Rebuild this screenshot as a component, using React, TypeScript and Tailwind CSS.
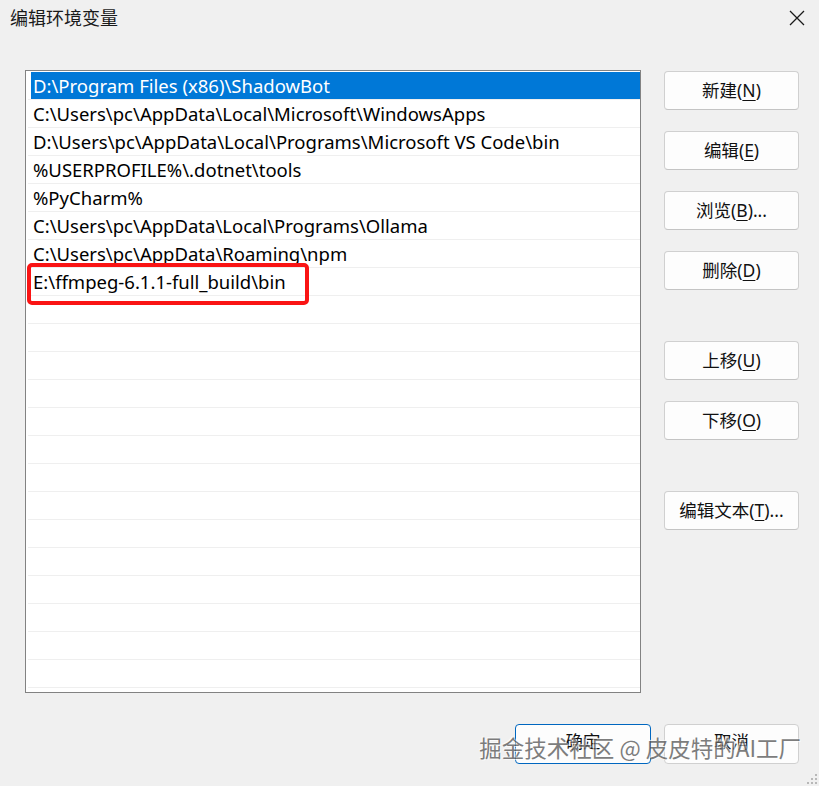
import React from "react";

const rows = [
  "D:\\Program Files (x86)\\ShadowBot",
  "C:\\Users\\pc\\AppData\\Local\\Microsoft\\WindowsApps",
  "D:\\Users\\pc\\AppData\\Local\\Programs\\Microsoft VS Code\\bin",
  "%USERPROFILE%\\.dotnet\\tools",
  "%PyCharm%",
  "C:\\Users\\pc\\AppData\\Local\\Programs\\Ollama",
  "C:\\Users\\pc\\AppData\\Roaming\\npm",
  "E:\\ffmpeg-6.1.1-full_build\\bin",
];

const font = { fontFamily: '"Noto Sans", "Noto Sans CJK SC", sans-serif' };

function Btn({ label, acc, suffix = "", className = "" }: { label: string; acc?: string; suffix?: string; className?: string }) {
  return (
    <div
      className={`w-[135px] h-[39px] flex items-center justify-center rounded-[4px] border border-[#d0d0d0] border-b-[#c4c4c4] bg-[#fdfdfd] text-[17.5px] text-[#111] ${className}`}
    >
      <span className="leading-none">
        {label}
        {acc !== undefined && (
          <>
            (<span className="underline underline-offset-[3px] decoration-1">{acc}</span>){suffix}
          </>
        )}
      </span>
    </div>
  );
}

export default function App() {
  const total = 22;
  return (
    <div className="relative w-[819px] h-[786px] bg-[#f0f0f0] overflow-hidden flex flex-col" style={font}>
      {/* title bar */}
      <div className="h-[36px] flex items-start justify-between">
        <div className="pl-[10px] pt-[5px] text-[18px] leading-[24px] text-[#1a1a1a]" style={{ fontFamily: '"Noto Sans CJK SC", sans-serif' }}>
          编辑环境变量
        </div>
        <svg className="mt-[10px] mr-[14px]" width="16" height="16" viewBox="0 0 16 16">
          <path d="M1 1 L15 15 M15 1 L1 15" stroke="#1a1a1a" strokeWidth="1.3" fill="none" />
        </svg>
      </div>

      <div className="flex pl-[25px] pt-[34px]">
        {/* list */}
        <div className="relative w-[616px] h-[623px] border border-[#828282] bg-white pt-[1px] pl-[2px]">
          {Array.from({ length: total }).map((_, i) => (
            <div key={i} className="h-[28px] border-b border-[#efefef] flex">
              {i === 0 ? (
                <div className="ml-[3px] flex-1 h-[27px] bg-[#0078d7] text-white text-[18.5px] leading-[27px] pl-[2px] whitespace-nowrap">
                  {rows[i]}
                </div>
              ) : (
                <div className="flex-1 h-[27px] text-black text-[18.5px] leading-[27px] pl-[5px] whitespace-nowrap">
                  {rows[i] ?? ""}
                </div>
              )}
            </div>
          ))}
          {/* red annotation */}
          <div className="absolute left-[1px] top-[192px] w-[282px] h-[42px] border-[4px] border-[#fa1414] rounded-[5px]" />
        </div>

        {/* right buttons */}
        <div className="ml-[23px] mt-[1px] flex flex-col gap-[21px]">
          <Btn label="新建" acc="N" />
          <Btn label="编辑" acc="E" />
          <Btn label="浏览" acc="B" suffix="..." />
          <Btn label="删除" acc="D" />
          <Btn label="上移" acc="U" className="mt-[30px]" />
          <Btn label="下移" acc="O" />
          <Btn label="编辑文本" acc="T" suffix="..." className="mt-[30px]" />
        </div>
      </div>

      {/* bottom buttons */}
      <div className="flex justify-end gap-[13px] pr-[20px] mt-[31px]">
        <div className="w-[136px] h-[40px] flex items-center justify-center rounded-[4px] border-[1.5px] border-[#0067c0] bg-[#fdfdfd] text-[17.5px] text-[#111]">
          <span className="-mt-[6px]">确定</span>
        </div>
        <div className="w-[135px] h-[40px] flex items-center justify-center rounded-[4px] border border-[#d0d0d0] bg-[#fdfdfd] text-[17.5px] text-[#111]">
          <span className="-mt-[6px]">取消</span>
        </div>
      </div>

      {/* watermark */}
      <div
        className="absolute right-[18px] top-[732px] text-[22.5px] leading-[30px] text-[#5e5e5e] opacity-80 whitespace-nowrap [text-shadow:1px_1px_1px_#fff,-1px_-1px_1px_#fff]"
        style={{ fontFamily: '"Noto Sans CJK SC", sans-serif' }}
      >
        掘金技术社区 @ 皮皮特的AI工厂
      </div>

      {/* resize grip */}
      <svg className="absolute right-[1px] bottom-[1px]" width="12" height="12" viewBox="0 0 12 12">
        {[
          [9, 1], [9, 5], [5, 5], [9, 9], [5, 9], [1, 9],
        ].map(([x, y], i) => (
          <rect key={i} x={x} y={y} width="2" height="2" fill="#b8b8b8" />
        ))}
      </svg>
    </div>
  );
}
